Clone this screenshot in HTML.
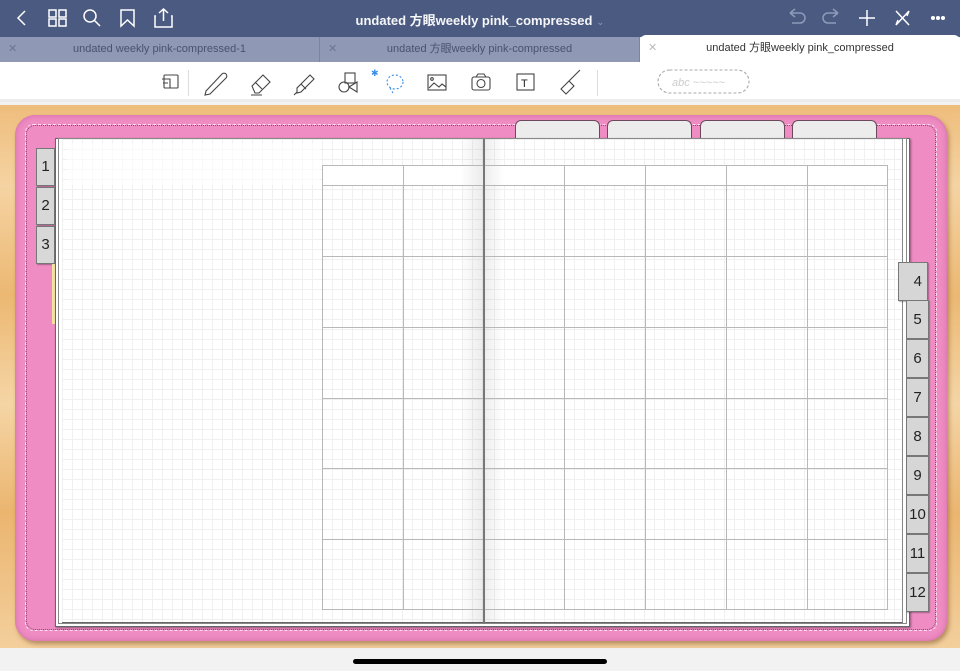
<!DOCTYPE html>
<html><head><meta charset="utf-8"><style>
*{margin:0;padding:0;box-sizing:border-box}
body{width:960px;height:671px;overflow:hidden;position:relative;background:#f2f2f2;font-family:"Liberation Sans","Noto Sans CJK JP",sans-serif}
.abs{position:absolute}
#top{left:0;top:0;width:960px;height:37px;background:#4b5a80}
#title{left:0;width:960px;top:10px;text-align:center;color:#fff;font-size:13px;font-weight:bold;opacity:.95}
.tab{top:37px;height:25px;background:#8f98b5;color:#4a5270;font-size:11px;text-align:center;line-height:25px;border-right:1px solid #7b84a2}
.tab .x{position:absolute;left:8px;top:0;color:#6d7595;font-size:11px}
#tb{left:0;top:62px;width:960px;height:40px;background:#fff;border-bottom:3px solid #ececec}
#wood{left:0;top:105px;width:960px;height:543px;background:linear-gradient(180deg,#eebd7c 0%,#f5d3a2 15%,#ecb872 35%,#f5d5a5 55%,#ebb56f 75%,#f3cf9c 100%)}
#cover{left:15px;top:115px;width:932px;height:526px;background:#ee8cc3;border-radius:20px;box-shadow:2px 3px 4px rgba(120,80,40,.5),inset 0 0 6px rgba(160,50,110,.35)}
#stitch{left:25px;top:124px;width:912px;height:507px;border:1px dashed #fbe0ee;border-radius:8px}
#stitch2{left:24px;top:123px;width:914px;height:509px;border:2px dotted rgba(90,40,60,.55);border-radius:9px;clip-path:none}
.page{background-color:#fff;background-image:linear-gradient(#f0f0f0 1px,transparent 1px),linear-gradient(90deg,#f0f0f0 1px,transparent 1px);background-size:10px 10px}
.ttab{top:120px;width:85px;height:20px;background:#ececec;border:1px solid #6a4a5a;border-bottom:none;border-radius:6px 6px 0 0}
.lt{left:36px;width:19px;height:38px;background:#d8d8d8;border:1px solid #777;font-size:15px;text-align:center;line-height:36px;color:#222;box-shadow:1px 1px 1px rgba(0,0,0,.3)}
.rt{width:23px;height:39px;background:#d6d6d6;border:1px solid #777;font-size:15px;text-align:center;line-height:37px;color:#222;box-shadow:1px 1px 1px rgba(0,0,0,.3)}
.vl{width:1px;background:#b8b8b8}
.hl{height:1px;background:#b8b8b8}
svg{position:absolute}
</style></head><body>
<div id="top" class="abs"></div>
<div id="title" class="abs">undated 方眼weekly pink_compressed <span style="font-weight:normal;color:#8f9ab8;font-size:10px">⌄</span></div>
<svg style="left:0;top:0" width="960" height="37" fill="none" stroke="#fff" stroke-width="1.5">
<path d="M25 11 L18 18 L25 25"/>
<rect x="49" y="10" width="7" height="7"/><rect x="59" y="10" width="7" height="7"/><rect x="49" y="19" width="7" height="7"/><rect x="59" y="19" width="7" height="7"/>
<circle cx="90" cy="16" r="6"/><path d="M94 20 L100 26"/>
<path d="M121 10 H134 V26 L127.5 20 L121 26 Z"/>
<path d="M156 16 H155 V27 H172 V16 H171 M163.5 21 V9 M159 13 L163.5 9 L168 13"/>
<path d="M790 13 L795 9 M790 13 L795 17 M790 13 H800 A5 5 0 0 1 800 23 H792" stroke="#8e9abb"/>
<path d="M838 13 L833 9 M838 13 L833 17 M838 13 H828 A5 5 0 0 0 828 23 H836" stroke="#8e9abb"/>
<path d="M867 10 V26 M859 18 H875"/>
<path d="M896 11 L909 25 M909 11 L896 25 M896 25 L898 20 M909 11 L907 16"/>
<circle cx="933" cy="18" r="1.3" fill="#fff"/><circle cx="938" cy="18" r="1.3" fill="#fff"/><circle cx="943" cy="18" r="1.3" fill="#fff"/>
</svg>
<div class="abs tab" style="left:0;width:320px"><span class="x">✕</span>undated weekly pink-compressed-1</div>
<div class="abs tab" style="left:320px;width:320px"><span class="x">✕</span>undated 方眼weekly pink-compressed</div>
<div class="abs tab" style="left:640px;top:35px;height:28px;width:320px;background:#fff;color:#333;border-radius:6px 6px 0 0;line-height:26px;border:none"><span class="x" style="color:#bbb">✕</span>undated 方眼weekly pink_compressed</div>
<div id="tb" class="abs"></div>
<svg style="left:0;top:62px" width="960" height="40" fill="none" stroke="#444" stroke-width="1.1">
<rect x="164" y="13" width="14" height="13" rx="1"/><path d="M162 17 H170 V26 M163 21 H168"/>
<path d="M188.5 8 V34 M597.5 8 V34" stroke="#ddd"/>
<path d="M206 29 L222 12 A2.5 2.5 0 0 1 226 16 L210 32 L205 33 Z"/>
<path d="M252 24 L263 13 L270 20 L259 31 L255 31 Z M255 20 L262 27 M251 33 H262"/>
<path d="M297 31 L297 26 L310 13 L314 17 L301 30 Z M301 22 L306 27 M294 33 L297 30"/>
<rect x="345" y="11" width="10" height="10"/><circle cx="344" cy="25" r="5"/><path d="M357 20 V30 L349 25 Z"/>
<ellipse cx="395" cy="20" rx="8" ry="7" stroke="#3a8ee6" stroke-dasharray="2 2"/><path d="M390 26 L393 31" stroke="#3a8ee6" stroke-dasharray="2 2"/>
<text x="371" y="14" fill="#3a8ee6" stroke="none" font-size="9">✱</text>
<rect x="428" y="13" width="18" height="15"/><circle cx="432" cy="17" r="1.3"/><path d="M429 26 L434 21 L439 25 L442 22 L446 25"/>
<rect x="472" y="15" width="18" height="13" rx="2"/><circle cx="481" cy="21.5" r="4"/><path d="M476 15 L478 12 H484 L486 15"/>
<rect x="517" y="12" width="17" height="16"/><text x="521" y="25" fill="#222" stroke="none" font-size="11">T</text>
<path d="M561 31 L569 23 L574 28 L566 36 Z M569 23 L580 12" transform="translate(0,-4)"/>
<rect x="658" y="8" width="91" height="23" rx="11.5" stroke="#aaa" stroke-dasharray="3 2"/>
<text x="672" y="24" fill="#ccc" stroke="none" font-size="11" font-style="italic">abc ~~~~~</text>
</svg>
<div id="wood" class="abs"></div>
<div id="cover" class="abs"></div>
<div id="stitch2" class="abs" style="border-width:1px;border-style:dotted;border-color:rgba(80,30,50,.6);left:26px;top:125px;width:910px;height:505px"></div>
<div id="stitch" class="abs"></div>
<div class="abs ttab" style="left:515px"></div>
<div class="abs ttab" style="left:607px"></div>
<div class="abs ttab" style="left:700px"></div>
<div class="abs ttab" style="left:792px"></div>
<div class="abs lt" style="top:148px">1</div>
<div class="abs lt" style="top:187px">2</div>
<div class="abs lt" style="top:226px">3</div>
<div class="abs" style="left:52px;top:264px;width:3px;height:60px;background:#f3e2a0"></div>
<div class="abs" style="left:55px;top:138px;width:855px;height:489px;background:#fff;border:1px solid #666;box-shadow:1px 1px 2px rgba(0,0,0,.4)"></div>
<div class="abs" style="left:58px;top:138px;width:849px;height:486px;background:#fff;border:1px solid #888"></div>
<div class="abs page" style="left:62px;top:139px;width:421px;height:484px;border-bottom:1px solid #666"></div>
<div class="abs page" style="left:484px;top:139px;width:419px;height:484px;border-bottom:1px solid #666;border-right:1px solid #888"></div>
<div class="abs" style="left:67px;top:143px;width:253px;height:42px;background:rgba(255,255,255,.6)"></div>
<div class="abs" style="left:322px;top:165px;width:565px;height:20px;background:#fff"></div>
<div class="abs" style="left:460px;top:139px;width:23px;height:484px;background:linear-gradient(90deg,rgba(0,0,0,0),rgba(0,0,0,.08))"></div>
<div class="abs" style="left:484px;top:139px;width:20px;height:484px;background:linear-gradient(90deg,rgba(0,0,0,.07),rgba(0,0,0,0))"></div>
<div class="abs vl" style="left:322px;top:165px;height:444px"></div>
<div class="abs vl" style="left:403px;top:165px;height:444px"></div>
<div class="abs vl" style="left:564px;top:165px;height:444px"></div>
<div class="abs vl" style="left:645px;top:165px;height:444px"></div>
<div class="abs vl" style="left:726px;top:165px;height:444px"></div>
<div class="abs vl" style="left:807px;top:165px;height:444px"></div>
<div class="abs vl" style="left:887px;top:165px;height:444px"></div>
<div class="abs hl" style="left:322px;top:165px;width:566px"></div>
<div class="abs hl" style="left:322px;top:185px;width:566px"></div>
<div class="abs hl" style="left:322px;top:256px;width:566px"></div>
<div class="abs hl" style="left:322px;top:327px;width:566px"></div>
<div class="abs hl" style="left:322px;top:398px;width:566px"></div>
<div class="abs hl" style="left:322px;top:468px;width:566px"></div>
<div class="abs hl" style="left:322px;top:539px;width:566px"></div>
<div class="abs hl" style="left:322px;top:609px;width:566px"></div>
<div class="abs" style="left:483px;top:139px;width:2px;height:485px;background:#777"></div>
<div class="abs rt" style="left:898px;top:262px;width:30px;text-align:right;padding-right:5px">4</div>
<div class="abs rt" style="left:906px;top:300px">5</div>
<div class="abs rt" style="left:906px;top:339px">6</div>
<div class="abs rt" style="left:906px;top:378px">7</div>
<div class="abs rt" style="left:906px;top:417px">8</div>
<div class="abs rt" style="left:906px;top:456px">9</div>
<div class="abs rt" style="left:906px;top:495px">10</div>
<div class="abs rt" style="left:906px;top:534px">11</div>
<div class="abs rt" style="left:906px;top:573px">12</div>
<div class="abs" style="left:353px;top:659px;width:254px;height:5px;border-radius:3px;background:#000"></div>
</body></html>
